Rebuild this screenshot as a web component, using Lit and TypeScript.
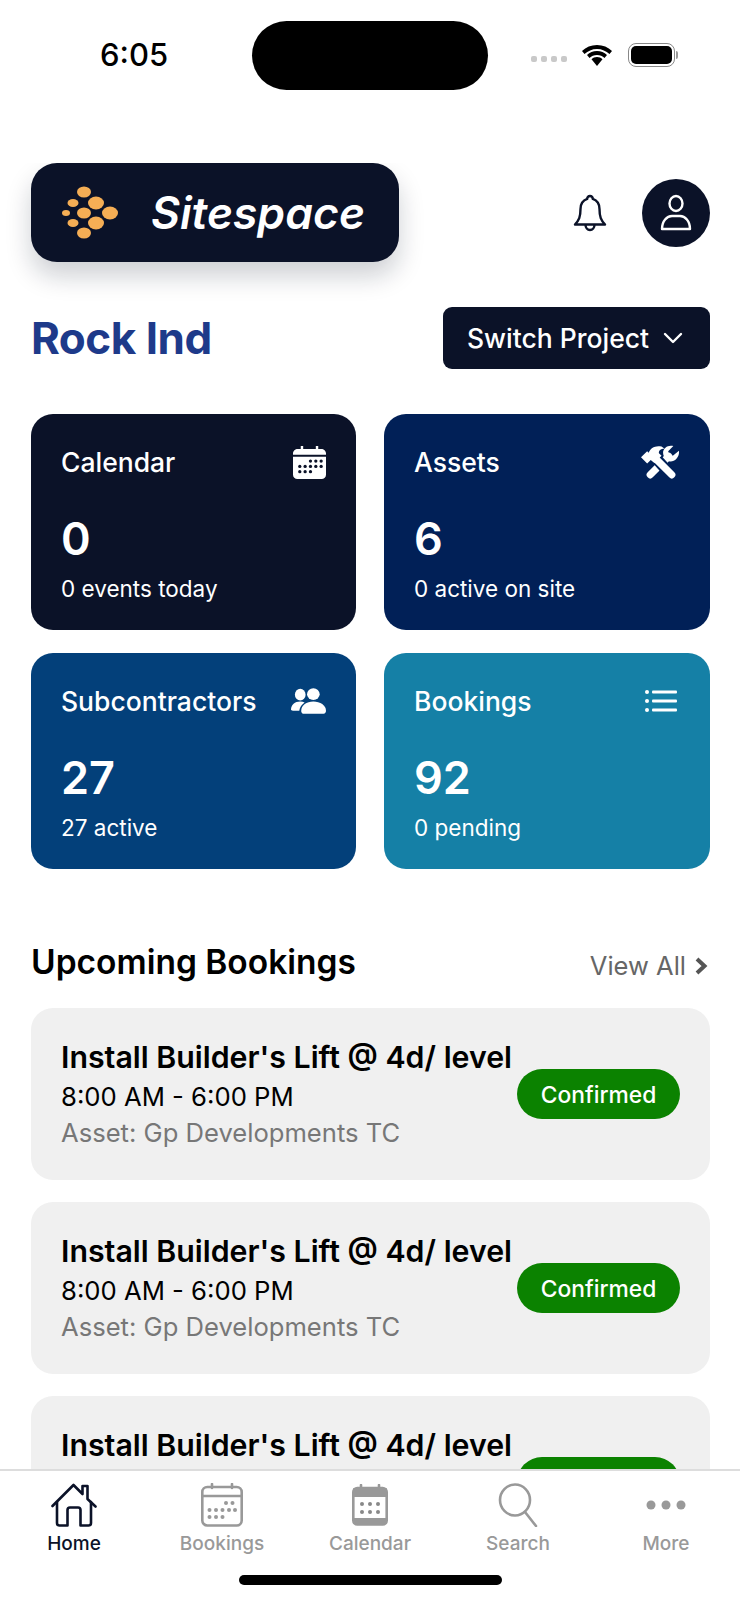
import { LitElement, html, css, svg, nothing } from 'lit';
import { customElement } from 'lit/decorators.js';

const logoDots = [
  [84, 192, 7, 5.5], [73, 203, 5.5, 4], [96, 203, 8, 6.5], [66, 213, 4, 3], [84, 213, 7, 5.5],
  [110, 213, 8, 6.5], [73, 223, 5.5, 4], [96, 223, 8, 6.5], [84, 233, 7, 5.5],
];

const logoIcon = html`<svg class="logo-mark" viewBox="60 185 60 55" width="60" height="55">
  ${logoDots.map(([x, y, rx, ry]) => svg`<ellipse cx=${x} cy=${y} rx=${rx} ry=${ry} fill="#f5ae55"></ellipse>`)}
</svg>`;

const bell = html`<svg viewBox="0 0 36 40" width="36" height="40" fill="none" stroke="#0b1228" stroke-width="2.4" stroke-linejoin="round">
  <path d="M18 3c-1.8 0-2.8 1.3-2.8 2.9C10.800 7.500 8.500 11 8.500 16c0 8-1.500 11-5.500 15.500h30C29 27 27.500 24 27.500 16c0-5-2.300-8.500-6.700-10.100C20.800 4.300 19.800 3 18 3z"/>
  <path d="M13.500 31.500c0 3.500 2 5.500 4.500 5.500s4.500-2 4.500-5.500"/>
</svg>`;

const person = html`<svg viewBox="0 0 36 40" width="36" height="40" fill="none" stroke="#fff" stroke-width="2.400">
  <ellipse cx="18" cy="10.500" rx="6.500" ry="7.500"/>
  <path d="M4 36c0-8 5-13 10-13h8c5 0 10 5 10 13z" stroke-linejoin="round"/>
</svg>`;

const chevron = html`<svg viewBox="0 0 20 12" width="20" height="12" fill="none" stroke="#fff" stroke-width="2.400" stroke-linecap="round" stroke-linejoin="round"><path d="M2 2l8 8 8-8"/></svg>`;

const calSolid = html`<svg viewBox="0 0 34 34" width="33" height="33" fill="#fff">
  <path d="M8 0h2.500v3h13V0H26v3h3c2.800 0 5 2 5 4.500V9H0V7.500C0 5 2.200 3 5 3h3z"/>
  <path fill-rule="evenodd" d="M0 11h34v18.500c0 2.500-2 4.500-4.500 4.500h-25C2 34 0 32 0 29.500z"/>
  <g fill="#0b1228">
    <circle cx="18" cy="15.500" r="1.700"/><circle cx="23.500" cy="15.500" r="1.700"/><circle cx="29" cy="15.500" r="1.700"/>
    <circle cx="7" cy="21" r="1.700"/><circle cx="12.500" cy="21" r="1.700"/><circle cx="18" cy="21" r="1.700"/><circle cx="23.500" cy="21" r="1.700"/><circle cx="29" cy="21" r="1.700"/>
    <circle cx="7" cy="26.500" r="1.700"/><circle cx="12.500" cy="26.500" r="1.700"/><circle cx="18" cy="26.500" r="1.700"/>
  </g>
</svg>`;

const tools = html`<svg viewBox="0 0 38 34" width="39" height="35" fill="none" stroke-linecap="round">
  <path d="M9 29L27 11" stroke="#fff" stroke-width="7"/>
  <path d="M37 5.500l-6 5-3.500-1-1-3.500 5-5c-4.500-1.500-10 1.500-10 6.500 0 1.200.3 2.300.8 3.300l5 5c5 1.300 10.500-4 9.700-10.300z" fill="#fff"/>
  <path d="M12 10L29 29" stroke="#012057" stroke-width="11" stroke-linecap="butt"/>
  <path d="M13 12L30 29" stroke="#fff" stroke-width="7"/>
  <path d="M0 12l6-6 1.500 1.500C9 3 14 0 20 1.500l3 2c-4 0-6 2-5.500 4.500l2.500 2.500-7 7-3.500-3-3.500 3.500z" fill="#fff"/>
</svg>`;

const people = html`<svg viewBox="0 0 36 26" width="35" height="26" fill="#fff">
  <ellipse cx="9.500" cy="6.500" rx="5.500" ry="6"/>
  <ellipse cx="23" cy="6" rx="6.500" ry="6"/>
  <path d="M0 22c0-5 4-8.500 9.500-8.500 1.800 0 3.300.4 4.500 1-3 2-5 5-5.500 8.500H2c-1.200 0-2-.8-2-1z"/>
  <path d="M10.500 23c0-5.500 5.500-9.500 12.500-9.500S36 17.500 36 23c0 1.700-1 3-2.500 3h-21c-1.200 0-2-1.300-2-3z"/>
</svg>`;

const list = html`<svg viewBox="0 0 35 24" width="35" height="24" fill="#fff">
  <circle cx="2" cy="3" r="2"/><circle cx="2" cy="12" r="2"/><circle cx="2" cy="21" r="2"/>
  <rect x="7" y="1.500" width="25" height="3" rx="1"/><rect x="7" y="10.500" width="25" height="3" rx="1"/><rect x="7" y="19.500" width="25" height="3" rx="1"/>
</svg>`;

const viewChevron = html`<svg viewBox="0 0 13 18" width="13" height="18" fill="none" stroke="#555" stroke-width="4"><path d="M2 2l7.500 7L2 16"/></svg>`;

const tabHome = html`<svg viewBox="0 0 46 44" width="46" height="44" fill="none" stroke="#0b1228" stroke-width="2.600" stroke-linejoin="round" stroke-linecap="round">
  <path d="M1.500 23L22.500 2l9 9V3h5v13l8 7.500"/>
  <path d="M6 19v21c0 1.500 1 2.500 2.500 2.500h8V27c0-1.500 1-2.500 2.500-2.500h8c1.500 0 2.500 1 2.500 2.500v15.500h8c1.500 0 2.500-1 2.500-2.500V19"/>
</svg>`;

const tabBookings = html`<svg viewBox="0 0 42 44" width="42" height="44" fill="none" stroke="#999" stroke-width="2.600">
  <rect x="1.300" y="4" width="39.400" height="38.500" rx="5"/>
  <path d="M1.300 13h39.400M11 1v4M31 1v4" stroke-linecap="round"/>
  <g fill="#999" stroke="none">
    <circle cx="25" cy="20" r="2"/><circle cx="31.500" cy="20" r="2"/>
    <circle cx="8.500" cy="27" r="2"/><circle cx="15" cy="27" r="2"/><circle cx="21.500" cy="27" r="2"/><circle cx="28" cy="27" r="2"/><circle cx="34" cy="27" r="2"/>
    <circle cx="8.500" cy="34" r="2"/><circle cx="15" cy="34" r="2"/><circle cx="21.500" cy="34" r="2"/>
  </g>
</svg>`;

const tabCalendar = html`<svg viewBox="0 0 36 42" width="36" height="42" fill="none">
  <path d="M9 1v4M27 1v4" stroke="#999" stroke-width="2.600" stroke-linecap="round"/>
  <rect x="1.300" y="4" width="33.400" height="36.500" rx="4" stroke="#999" stroke-width="2.600"/>
  <rect x="1.300" y="4" width="33.400" height="9" fill="#999"/>
  <rect x="1.300" y="34" width="33.400" height="6" fill="#999"/>
  <g fill="#888">
    <circle cx="10" cy="20" r="2"/><circle cx="18" cy="20" r="2"/><circle cx="26" cy="20" r="2"/>
    <circle cx="10" cy="28" r="2"/><circle cx="18" cy="28" r="2"/><circle cx="26" cy="28" r="2"/>
  </g>
</svg>`;

const tabSearch = html`<svg viewBox="0 0 40 44" width="40" height="44" fill="none" stroke="#999" stroke-width="2.600" stroke-linecap="round">
  <ellipse cx="17" cy="17" rx="15" ry="15.500"/><path d="M27 29l11 14"/>
</svg>`;

const tabMore = html`<svg viewBox="0 0 40 12" width="40" height="12" fill="#999">
  <circle cx="5" cy="6" r="4.500"/><circle cx="20" cy="6" r="4.500"/><circle cx="35" cy="6" r="4.500"/>
</svg>`;

const stats = [
  { label: 'Calendar', value: '0', sub: '0 events today', color: '#0b1228', icon: calSolid },
  { label: 'Assets', value: '6', sub: '0 active on site', color: '#012057', icon: tools },
  { label: 'Subcontractors', value: '27', sub: '27 active', color: '#03407a', icon: people },
  { label: 'Bookings', value: '92', sub: '0 pending', color: '#1580a6', icon: list },
];

// the third card runs under the tab bar, only its title and the top of the badge show
const bookings = [
  { title: "Install Builder's Lift @ 4d/ level", time: '8:00 AM - 6:00 PM', asset: 'Asset: Gp Developments TC', status: 'Confirmed' },
  { title: "Install Builder's Lift @ 4d/ level", time: '8:00 AM - 6:00 PM', asset: 'Asset: Gp Developments TC', status: 'Confirmed' },
  { title: "Install Builder's Lift @ 4d/ level", time: '', asset: '', status: '' },
];

const tabs = [
  { label: 'Home', icon: tabHome, active: true },
  { label: 'Bookings', icon: tabBookings, active: false },
  { label: 'Calendar', icon: tabCalendar, active: false },
  { label: 'Search', icon: tabSearch, active: false },
  { label: 'More', icon: tabMore, active: false },
];

@customElement('app-root')
export class AppRoot extends LitElement {
  static styles = css`
    :host {
      display: flex;
      flex-direction: column;
      width: 740px;
      height: 1600px;
      background: #fff;
      overflow: hidden;
      font-family: Inter, "Noto Sans", sans-serif;
      color: #0b1228;
    }

    .status {
      flex: none;
      display: flex;
      align-items: flex-start;
      height: 163px;
      box-sizing: border-box;
      padding-top: 21px;
    }

    .time {
      width: 252px;
      box-sizing: border-box;
      padding: 17px 0 0 100px;
      font-size: 31px;
      line-height: 34px;
      font-weight: 500;
      color: #000;
    }

    .notch {
      width: 236px;
      height: 69px;
      border-radius: 35px;
      background: #000;
    }

    .status-right {
      display: flex;
      align-items: center;
      gap: 13px;
      padding: 22px 0 0 43px;
    }

    .signal {
      display: flex;
      gap: 4px;
      margin-top: 8px;
    }

    .signal i {
      width: 6px;
      height: 6px;
      border-radius: 2px;
      background: #c9c9c9;
    }

    .battery {
      display: flex;
      align-items: center;
      gap: 1px;
      margin-left: 1px;
    }

    .battery-body {
      box-sizing: border-box;
      width: 47px;
      height: 24px;
      padding: 2px;
      border: 1.500px solid #888;
      border-radius: 8px;
    }

    .battery-body b {
      display: block;
      height: 100%;
      border-radius: 5px;
      background: #000;
    }

    .battery-tip {
      width: 2px;
      height: 8px;
      border-radius: 0 2px 2px 0;
      background: #999;
    }

    main {
      flex: 1;
      min-height: 0;
      overflow: hidden;
      padding: 0 30px 0 31px;
    }

    .header {
      display: flex;
      align-items: center;
      justify-content: space-between;
    }

    .logo {
      display: flex;
      align-items: center;
      box-sizing: border-box;
      width: 368px;
      height: 99px;
      padding-left: 29px;
      border-radius: 26px;
      background: #0b1228;
      box-shadow: 0 14px 26px rgba(11, 18, 40, 0.2);
    }

    .logo-name {
      margin-left: 31px;
      font-size: 44.500px;
      font-weight: 600;
      font-style: italic;
      color: #fff;
    }

    .header-right {
      display: flex;
      align-items: center;
      gap: 34px;
    }

    .avatar {
      display: flex;
      align-items: center;
      justify-content: center;
      width: 68px;
      height: 68px;
      border-radius: 50%;
      background: #0b1228;
    }

    .title-row {
      display: flex;
      align-items: center;
      justify-content: space-between;
      margin-top: 45px;
    }

    h1 {
      margin: 0;
      font-size: 44px;
      font-weight: 700;
      letter-spacing: -0.500px;
      color: #1e3a8a;
    }

    .switch {
      display: flex;
      align-items: center;
      justify-content: center;
      gap: 14px;
      width: 267px;
      height: 62px;
      padding-right: 3px;
      box-sizing: border-box;
      border-radius: 9px;
      background: #0b1228;
      color: #fff;
      font-size: 26.500px;
      font-weight: 500;
    }

    .stats {
      display: grid;
      grid-template-columns: 325px 326px;
      gap: 23px 28px;
      margin-top: 45px;
    }

    .stat {
      box-sizing: border-box;
      height: 216px;
      padding: 30px 30px 30px;
      border-radius: 22px;
      color: #fff;
    }

    .stat-top {
      display: flex;
      align-items: center;
      justify-content: space-between;
      height: 36px;
    }

    .stat-label {
      font-size: 26.500px;
      font-weight: 500;
    }

    .stat-value {
      margin-top: 32px;
      font-size: 45px;
      line-height: 54px;
      font-weight: 600;
    }

    .stat-sub {
      margin-top: 9px;
      font-size: 22.500px;
      line-height: 28px;
    }

    .section {
      display: flex;
      align-items: flex-end;
      justify-content: space-between;
      margin-top: 71px;
    }

    h2 {
      margin: 0;
      font-size: 33.500px;
      line-height: 44px;
      font-weight: 600;
      color: #000;
    }

    .view-all {
      display: flex;
      align-items: center;
      gap: 9px;
      padding-right: 2px;
      font-size: 25.500px;
      line-height: 36px;
      color: #666;
    }

    .booking {
      display: flex;
      align-items: flex-start;
      justify-content: space-between;
      box-sizing: border-box;
      height: 172px;
      margin-top: 22px;
      padding: 29px 30px 0;
      border-radius: 22px;
      background: #f0f0f0;
    }

    .section + .booking {
      margin-top: 24px;
    }

    .booking-title {
      font-size: 30.300px;
      line-height: 40px;
      font-weight: 600;
      color: #000;
      white-space: nowrap;
    }

    .booking-time {
      margin-top: 2px;
      font-size: 25.700px;
      line-height: 36px;
      color: #000;
    }

    .booking-asset {
      font-size: 25.600px;
      line-height: 36px;
      color: #777;
    }

    .badge {
      display: flex;
      align-items: center;
      justify-content: center;
      flex: none;
      width: 163px;
      height: 50px;
      margin-top: 32px;
      border-radius: 25px;
      background: #0b8200;
      color: #fff;
      font-size: 22.800px;
      font-weight: 500;
    }

    footer {
      flex: none;
      box-sizing: border-box;
      height: 131px;
      border-top: 2px solid #ddd;
      background: #fff;
    }

    .tabs {
      display: grid;
      grid-template-columns: repeat(5, 148px);
    }

    .tab {
      display: flex;
      flex-direction: column;
      align-items: center;
      color: #999;
      font-size: 19px;
      font-weight: 500;
      line-height: 26px;
    }

    .tab.active {
      color: #0b1228;
    }

    .tab-icon {
      display: flex;
      align-items: center;
      justify-content: center;
      height: 46px;
      margin: 11px 0 3px;
    }

    .home-bar {
      width: 263px;
      height: 10px;
      margin: 18px auto 0;
      border-radius: 5px;
      background: #000;
    }
  `;

  render() {
    return html`
      <div class="status">
        <div class="time">6:05</div>
        <div class="notch"></div>
        <div class="status-right">
          <div class="signal"><i></i><i></i><i></i><i></i></div>
          <svg viewBox="0 0 34 24" width="34" height="24" fill="#000">
            <path d="M17 6c5 0 9 2 12.500 5l2.500-3C28 4 23 2 17 2S6 4 2 8l2.500 3C8 8 12 6 17 6z"/>
            <path d="M17 12c3 0 5.500 1 7.500 3l2.500-3c-2.700-2.400-6-4-10-4s-7.300 1.600-10 4l2.500 3c2-2 4.500-3 7.500-3z"/>
            <path d="M17 14c-2.300 0-4 .8-5.500 2.200L17 23l5.500-6.800C21 14.800 19.300 14 17 14z"/>
          </svg>
          <div class="battery"><div class="battery-body"><b></b></div><div class="battery-tip"></div></div>
        </div>
      </div>
      <main>
        <div class="header">
          <div class="logo">${logoIcon}<span class="logo-name">Sitespace</span></div>
          <div class="header-right">${bell}<div class="avatar">${person}</div></div>
        </div>
        <div class="title-row">
          <h1>Rock Ind</h1>
          <div class="switch">Switch Project ${chevron}</div>
        </div>
        <div class="stats">
          ${stats.map((s) => html`
            <div class="stat" style="background:${s.color}">
              <div class="stat-top"><span class="stat-label">${s.label}</span>${s.icon}</div>
              <div class="stat-value">${s.value}</div>
              <div class="stat-sub">${s.sub}</div>
            </div>
          `)}
        </div>
        <div class="section">
          <h2>Upcoming Bookings</h2>
          <div class="view-all">View All ${viewChevron}</div>
        </div>
        ${bookings.map((b) => html`
          <div class="booking">
            <div>
              <div class="booking-title">${b.title}</div>
              ${b.time ? html`<div class="booking-time">${b.time}</div>` : nothing}
              ${b.asset ? html`<div class="booking-asset">${b.asset}</div>` : nothing}
            </div>
            <div class="badge">${b.status}</div>
          </div>
        `)}
      </main>
      <footer>
        <div class="tabs">
          ${tabs.map((t) => html`
            <div class="tab ${t.active ? 'active' : ''}">
              <div class="tab-icon">${t.icon}</div>
              <span>${t.label}</span>
            </div>
          `)}
        </div>
        <div class="home-bar"></div>
      </footer>
    `;
  }
}
